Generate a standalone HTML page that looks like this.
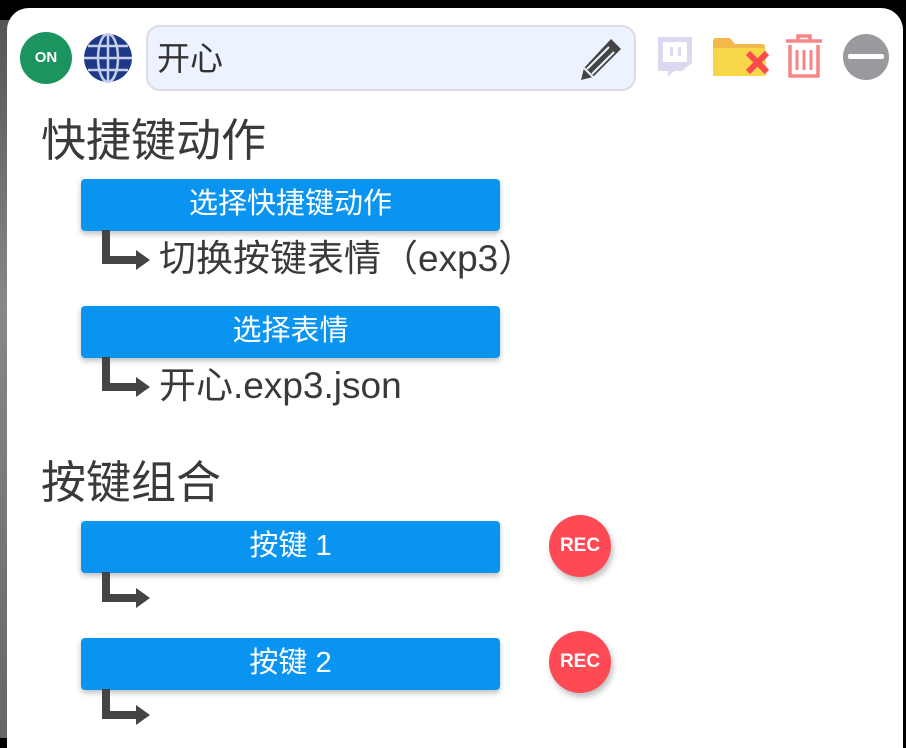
<!DOCTYPE html>
<html><head><meta charset="utf-8"><style>
*{margin:0;padding:0;box-sizing:border-box}
body{width:906px;height:738px;overflow:hidden;background:#000;font-family:"Liberation Sans","Noto Sans CJK SC",sans-serif;position:relative}
.bgl{position:absolute;left:0;top:20px;width:12px;height:718px;background:linear-gradient(#555,#888 40%,#666)}
.panel{position:absolute;left:7px;top:8px;width:896px;height:740px;background:#fff;border-radius:22px 22px 0 0}
.a{position:absolute}
.btn{position:absolute;left:81px;width:419px;height:52px;background:#0a94f2;border-radius:4px;color:#fff;font-size:29px;text-align:center;line-height:50px;box-shadow:0 3px 6px rgba(0,0,0,.25)}
.h{position:absolute;left:41px;font-size:45px;line-height:1;color:#3a3a3a}
.t{position:absolute;left:159px;font-size:37px;line-height:1;color:#3a3a3a}
.rec{position:absolute;left:549px;width:62px;height:62px;border-radius:50%;background:#fe4a55;color:#fff;font-weight:bold;font-size:19px;text-align:center;line-height:62px;box-shadow:2px 4px 6px rgba(0,0,0,.25)}
</style></head><body>
<div class="bgl"></div>
<div class="panel"></div>
<div class="a" style="left:20px;top:32px;width:52px;height:52px;border-radius:50%;background:#1c9460;color:#fff;font-size:15px;font-weight:bold;text-align:center;line-height:52px">ON</div>
<svg class="a" style="left:83px;top:33px" width="50" height="50" viewBox="0 0 50 50"><circle cx="25" cy="25" r="24" fill="#1d3a8a"/><g stroke="#c8d0e8" stroke-width="2.5" fill="none"><ellipse cx="25" cy="25" rx="10" ry="24"/><line x1="25" y1="1" x2="25" y2="49"/><line x1="1" y1="25" x2="49" y2="25"/><path d="M5 13 H45 M5 37 H45"/></g></svg>
<div class="a" style="left:146px;top:25px;width:490px;height:66px;background:#ecf2fe;border:2px solid #dcdce8;border-radius:14px"></div>
<div class="a" style="left:157px;top:42px;font-size:33px;line-height:1;color:#333">开心</div>
<svg class="a" style="left:578px;top:36px" width="46" height="46" viewBox="0 0 46 46"><path d="M33 3 L43 13 L15 41 L3 44 L6 32 Z" fill="#444"/><path d="M9 33 L31 11 M14 38 L36 16" stroke="#ecf2fe" stroke-width="2"/><path d="M6 32 L15 41" stroke="#ecf2fe" stroke-width="2"/></svg>
<svg class="a" style="left:656px;top:35px" width="38" height="44" viewBox="0 0 38 44"><path d="M2 2 H36 V28 L26 36 H18 L12 42 V36 H2 Z" fill="#ddd8ef"/><rect x="7" y="7" width="24" height="20" fill="#fff"/><rect x="14" y="12" width="3" height="9" fill="#ddd8ef"/><rect x="22" y="12" width="3" height="9" fill="#ddd8ef"/></svg>
<svg class="a" style="left:712px;top:35px" width="60" height="44" viewBox="0 0 60 44"><path d="M1 6 Q1 3 4 3 H18 L23 9 H50 Q53 9 53 12 V41 H1 Z" fill="#f2b84a"/><rect x="1" y="13" width="53" height="28" rx="2" fill="#f8d64a"/><path d="M36 18 L55 37 M55 18 L36 37" stroke="#fb4c4c" stroke-width="6"/></svg>
<svg class="a" style="left:784px;top:33px" width="40" height="46" viewBox="0 0 40 46"><g fill="none" stroke="#f78585" stroke-width="3.5"><path d="M2 8 H38 M14 8 V3 H26 V8"/><path d="M6 12 V43 H34 V12"/><path d="M13 17 V37 M20 17 V37 M27 17 V37" stroke-width="3"/></g></svg>
<svg class="a" style="left:842px;top:33px" width="48" height="48" viewBox="0 0 48 48"><circle cx="24" cy="24" r="23" fill="#9a9a9e"/><rect x="6" y="21" width="36" height="5" rx="2" fill="#fff"/></svg>
<div class="h" style="top:118px">快捷键动作</div>
<div class="btn" style="top:179px">选择快捷键动作</div>
<svg class="a" style="left:100px;top:230px" width="54" height="45" viewBox="0 0 54 45"><path d="M6 0 V30 H38" fill="none" stroke="#444" stroke-width="8"/><path d="M36 20 L50 30 L36 40 Z" fill="#444"/></svg>
<div class="t" style="top:240px">切换按键表情（exp3）</div>
<div class="btn" style="top:306px">选择表情</div>
<svg class="a" style="left:100px;top:357px" width="54" height="45" viewBox="0 0 54 45"><path d="M6 0 V30 H38" fill="none" stroke="#444" stroke-width="8"/><path d="M36 20 L50 30 L36 40 Z" fill="#444"/></svg>
<div class="t" style="top:367px">开心.exp3.json</div>
<div class="h" style="top:460px">按键组合</div>
<div class="btn" style="top:521px">按键 1</div>
<svg class="a" style="left:100px;top:572px" width="54" height="45" viewBox="0 0 54 45"><path d="M6 0 V26 H38" fill="none" stroke="#444" stroke-width="8"/><path d="M36 16 L50 26 L36 36 Z" fill="#444"/></svg>
<div class="rec" style="top:515px">REC</div>
<div class="btn" style="top:638px">按键 2</div>
<svg class="a" style="left:100px;top:689px" width="54" height="45" viewBox="0 0 54 45"><path d="M6 0 V26 H38" fill="none" stroke="#444" stroke-width="8"/><path d="M36 16 L50 26 L36 36 Z" fill="#444"/></svg>
<div class="rec" style="top:631px">REC</div>
</body></html>
